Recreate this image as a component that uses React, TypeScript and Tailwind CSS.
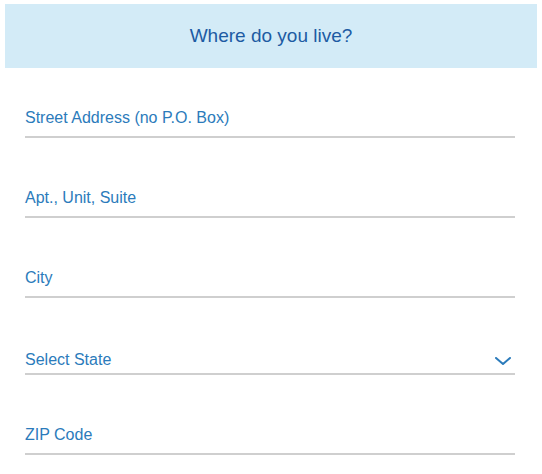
import React from "react";

function Field({ label, pt }: { label: string; pt: string }) {
  return (
    <div className={`${pt} pb-2 border-b-2 border-[#cfcfcf]`}>
      <div className="text-[16px] leading-[20px] text-[#2b7bbb]">{label}</div>
    </div>
  );
}

export default function App() {
  return (
    <div
      className="w-[542px] h-[474px] bg-white pt-[4px] px-[5px]"
      style={{ fontFamily: '"Liberation Sans", Arial, Helvetica, sans-serif' }}
    >
      <div className="h-[64px] bg-[#d3ebf7] flex items-center justify-center">
        <span className="text-[19px] text-[#1d5ba3]">Where do you live?</span>
      </div>
      <div className="pl-[20px] pr-[22px]">
        <Field label="Street Address (no P.O. Box)" pt="pt-[40px]" />
        <Field label="Apt., Unit, Suite" pt="pt-[50px]" />
        <Field label="City" pt="pt-[50px]" />
        <div className="pt-[52px] pb-[3px] border-b-2 border-[#cfcfcf] flex items-center justify-between">
          <div className="text-[16px] leading-[20px] text-[#2b7bbb]">Select State</div>
          <svg width="16" height="8" viewBox="0 0 16 8" className="mr-[4px] mt-[2px]">
            <path d="M1 1 L8 7 L15 1" fill="none" stroke="#2b7bbb" strokeWidth="2" strokeLinecap="round" strokeLinejoin="round" />
          </svg>
        </div>
        <Field label="ZIP Code" pt="pt-[50px]" />
      </div>
    </div>
  );
}
